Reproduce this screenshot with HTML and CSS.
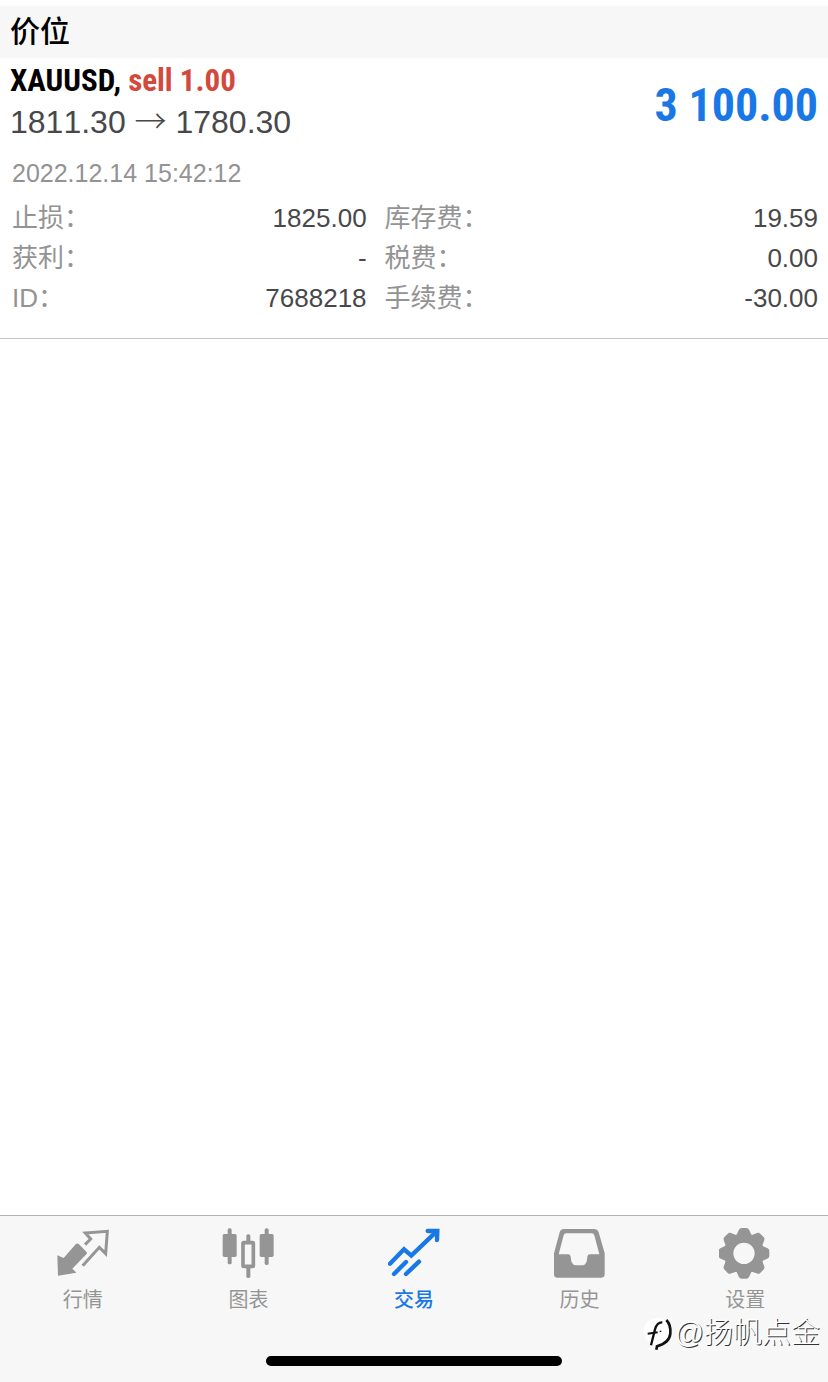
FILE: index.html
```
<!DOCTYPE html>
<html lang="zh-CN">
<head>
    <meta charset="UTF-8">
    <meta name="viewport" content="width=device-width, initial-scale=1.0">
    <title>交易</title>
    <link rel="stylesheet" href="styles.css">
</head>
<body>
    <main class="content">
        <h1 class="section-title">价位</h1>

        <article class="position">
            <div class="position-head">
                <div>
                    <h2 class="symbol">XAUUSD, <span class="side-sell">sell 1.00</span></h2>
                    <p class="prices">1811.30 <span class="arrow">→</span> 1780.30</p>
                </div>
                <strong class="profit">3 100.00</strong>
            </div>
            <time class="open-time" datetime="2022-12-14T15:42:12">2022.12.14 15:42:12</time>
            <dl class="details">
                <div class="detail"><dt>止损：</dt><dd>1825.00</dd></div>
                <div class="detail"><dt>库存费：</dt><dd>19.59</dd></div>
                <div class="detail"><dt>获利：</dt><dd>-</dd></div>
                <div class="detail"><dt>税费：</dt><dd>0.00</dd></div>
                <div class="detail"><dt>ID：</dt><dd>7688218</dd></div>
                <div class="detail"><dt>手续费：</dt><dd>-30.00</dd></div>
            </dl>
        </article>
    </main>

    <footer class="bottom">
        <nav class="tabs">
            <a class="tab" href="#quotes">
                <svg class="tab-icon" viewBox="0 0 156 156" aria-hidden="true">
                    <path d="M84 50L101 33L85 15L151 10L146 77L127 58L77 113" fill="none" stroke="currentColor" stroke-width="9"/>
                    <path d="M1 82L20 90L56 49Q61 44 66 49L88 71Q92 75 88 79L46 122L58 134L3 143Z" fill="currentColor"/>
                </svg>
                行情
            </a>
            <a class="tab" href="#chart">
                <svg class="tab-icon" viewBox="0 0 156 156" fill="currentColor" aria-hidden="true">
                    <rect x="17" y="1" width="12" height="108" rx="5"/>
                    <rect x="2" y="18" width="42" height="69" rx="5"/>
                    <rect x="73" y="19" width="12" height="24" rx="5"/>
                    <rect x="73" y="116" width="12" height="34" rx="5"/>
                    <rect x="63" y="44" width="31" height="71" rx="2" fill="none" stroke="currentColor" stroke-width="11"/>
                    <rect x="128" y="1" width="12" height="110" rx="5"/>
                    <rect x="113" y="18" width="42" height="69" rx="5"/>
                </svg>
                图表
            </a>
            <a class="tab active" href="#trade" aria-current="page">
                <svg class="tab-icon" viewBox="0 0 156 156" fill="none" stroke="currentColor" stroke-width="13" stroke-linecap="round" aria-hidden="true">
                    <path d="M6 107L48 64L70 83L142 14"/>
                    <path d="M119 9H148L147 36"/>
                    <path d="M18 138L54 102M54 138L93 101"/>
                </svg>
                交易
            </a>
            <a class="tab" href="#history">
                <svg class="tab-icon" viewBox="0 0 156 156" fill="currentColor" aria-hidden="true">
                    <path fill-rule="evenodd" d="M30 3H120Q130 3 134 13L152 76V139Q152 149 142 149H9Q0 149 0 139V76L17 13Q20 3 30 3ZM36 16Q31 16 29 22L14 79H42Q49 79 50 86Q51 112 67 112H84Q99 112 100 86Q101 79 108 79H136L121 22Q119 16 114 16Z"/>
                </svg>
                历史
            </a>
            <a class="tab" href="#settings">
                <svg class="tab-icon" viewBox="0 0 156 156" aria-hidden="true">
                    <defs>
                        <path id="tooth" d="M60 26L68 9H82L90 26Z" fill="currentColor" stroke="currentColor" stroke-width="18" stroke-linejoin="round"/>
                    </defs>
                    <circle cx="75" cy="76" r="46" fill="none" stroke="currentColor" stroke-width="28"/>
                    <use href="#tooth"/>
                    <use href="#tooth" transform="rotate(45 75 76)"/>
                    <use href="#tooth" transform="rotate(90 75 76)"/>
                    <use href="#tooth" transform="rotate(135 75 76)"/>
                    <use href="#tooth" transform="rotate(180 75 76)"/>
                    <use href="#tooth" transform="rotate(225 75 76)"/>
                    <use href="#tooth" transform="rotate(270 75 76)"/>
                    <use href="#tooth" transform="rotate(315 75 76)"/>
                </svg>
                设置
            </a>
        </nav>
        <div class="home-indicator"></div>
        <div class="watermark">
            <svg class="watermark-logo" viewBox="0 0 96 102" aria-hidden="true">
                <circle cx="42" cy="46" r="40" fill="#fff"/>
                <g fill="none" stroke="#111">
                    <path d="M58 19Q42 18 36 40L24 88" stroke-width="7"/>
                    <path d="M14 53L44 49" stroke-width="6"/>
                    <path d="M70 12Q84 26 82 52Q80 80 42 91L40 101" stroke-width="8"/>
                    <path d="M50 46H55" stroke-width="4"/>
                </g>
            </svg>
            <span>@扬帆点金</span>
        </div>
    </footer>
</body>
</html>
```

FILE: styles.css
```
:root {
    --color-text: #48484a;
    --color-muted: #939393;
    --color-blue: #1a78e6;
    --color-red: #d24a3c;
    --color-bar: #f7f7f7;
    --color-line: #c4c4c6;
    --font-narrow: "Roboto Condensed", "Liberation Sans Narrow", sans-serif;
}

* {
    margin: 0;
    padding: 0;
    box-sizing: border-box;
}

body {
    font-family: "Liberation Sans", "Noto Sans CJK SC", sans-serif;
    background-color: #fff;
    color: var(--color-text);
    min-height: 100vh;
    display: flex;
    flex-direction: column;
}

.content {
    flex: 1;
    padding-top: 6px;
}

.section-title {
    background-color: var(--color-bar);
    color: #000;
    font-size: 30px;
    font-weight: 500;
    line-height: 52px;
    padding: 0 10px;
}

/* Open position */
.position {
    padding: 4px 10px 20px;
    border-bottom: 1px solid var(--color-line);
}

.position-head {
    display: flex;
    justify-content: space-between;
    align-items: flex-end;
}

.symbol {
    font-family: var(--font-narrow);
    font-size: 31px;
    font-weight: bold;
    line-height: 38px;
    color: #000;
}

.side-sell {
    color: var(--color-red);
}

.prices {
    font-size: 32px;
    line-height: 44px;
    font-kerning: none;
}

.arrow {
    font-family: "Noto Sans CJK SC", sans-serif;
    font-weight: 300;
    line-height: 32px;
}

.profit {
    font-family: var(--font-narrow);
    font-size: 46px;
    line-height: 78px;
    color: var(--color-blue);
}

.open-time {
    display: block;
    margin: 9px 0 5px;
    padding-left: 2px;
    font-size: 25px;
    line-height: 40px;
    color: var(--color-muted);
}

.details {
    display: grid;
    grid-template-columns: 9fr 11fr;
    column-gap: 18px;
    padding-left: 2px;
    font-size: 26px;
    line-height: 40px;
}

.detail {
    display: flex;
    justify-content: space-between;
    height: 40px;
}

.detail dt {
    color: var(--color-muted);
}

/* Bottom bar */
.bottom {
    position: relative;
    background-color: var(--color-bar);
    border-top: 1px solid #b4b4b6;
    padding: 12px 0 16px;
}

.tabs {
    display: grid;
    grid-template-columns: repeat(5, 1fr);
}

.tab {
    display: flex;
    flex-direction: column;
    align-items: center;
    gap: 5px;
    font-size: 20px;
    line-height: 30px;
    color: #959595;
    text-decoration: none;
}

.tab.active {
    color: var(--color-blue);
    font-weight: 500;
}

.tab-icon {
    width: 52px;
    height: 52px;
}

.home-indicator {
    width: 296px;
    height: 10px;
    margin: 41px auto 0;
    border-radius: 5px;
    background-color: #000;
}

.watermark {
    position: absolute;
    right: 8px;
    bottom: 29px;
    display: flex;
    align-items: center;
    font-size: 29px;
    font-weight: 300;
    line-height: 40px;
    color: #fff;
    text-shadow: 1px 1px 0 #333;
}

.watermark-logo {
    width: 32px;
    height: 34px;
}
```
